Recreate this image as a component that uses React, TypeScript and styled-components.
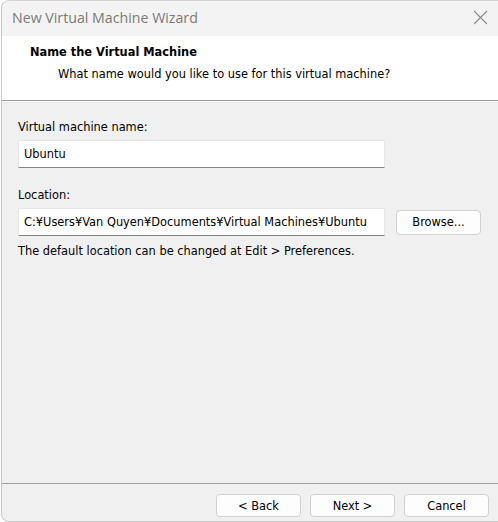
import React from "react";
import styled, { createGlobalStyle } from "styled-components";

const Global = createGlobalStyle`
  html, body { margin: 0; padding: 0; background: #ffffff; }
  body { width: 498px; height: 522px; overflow: hidden; }
  #root { width: 498px; height: 522px; }
`;

const Window = styled.div`
  box-sizing: border-box;
  width: 497px;
  height: 522px;
  margin-left: 1px;
  border-left: 1px solid #c8c8c8;
  border-top: 1px solid #d4d4d4;
  border-bottom: 1px solid #c8c8c8;
  border-radius: 8px 0 0 8px;
  overflow: hidden;
  display: flex;
  flex-direction: column;
  background: #f0f0f0;
  font-family: "DejaVu Sans", Tahoma, sans-serif;
  font-size: 11.4px;
  color: #000;
`;

const TitleBar = styled.div`
  height: 35px;
  flex: none;
  background: #f3f3f3;
  display: flex;
  align-items: center;
  justify-content: space-between;
  padding: 0 10px 0 10px;
`;

const Title = styled.span`
  font-family: "Open Sans", "Noto Sans", sans-serif;
  font-size: 14.2px;
  color: #7a7a7a;
  margin-top: -2px;
`;

const CloseIcon = styled.svg`
  width: 15px;
  height: 15px;
  margin-top: -2px;
`;

const Header = styled.div`
  flex: none;
  height: 65px;
  background: #ffffff;
  border-bottom: 1px solid #a0a0a0;
  box-sizing: border-box;
  padding: 9px 0 0 28px;
  display: flex;
  flex-direction: column;
  gap: 8px;
`;

const HeaderTitle = styled.div`
  font-weight: bold;
`;

const HeaderSub = styled.div`
  padding-left: 28px;
`;

const Body = styled.div`
  flex: 1;
  border-top: 1px solid #ffffff;
  padding: 18px 16px 0 16px;
  display: flex;
  flex-direction: column;
`;

const Label = styled.div<{ $top?: number }>`
  margin-top: ${(p) => p.$top ?? 0}px;
  margin-bottom: 6px;
`;

const Row = styled.div`
  display: flex;
  align-items: center;
  gap: 11px;
`;

const Field = styled.div`
  box-sizing: border-box;
  width: 367px;
  height: 28px;
  background: #ffffff;
  border: 1px solid #e6e6e6;
  border-bottom: 1px solid #858585;
  padding: 0 5px;
  display: flex;
  align-items: center;
  white-space: nowrap;
  overflow: hidden;
`;

const Button = styled.div<{ $h?: number }>`
  box-sizing: border-box;
  width: 85px;
  height: ${(p) => p.$h ?? 23}px;
  border: 1px solid #d0d0d0;
  border-radius: 4px;
  background: #fdfdfd;
  display: flex;
  align-items: center;
  justify-content: center;
`;

const Note = styled.div`
  margin-top: 8px;
`;

const Footer = styled.div`
  flex: none;
  height: 38px;
  border-top: 1px solid #a0a0a0;
  box-sizing: border-box;
  display: flex;
  justify-content: flex-end;
  align-items: flex-start;
  gap: 9px;
  padding: 10px 9px 0 0;
`;

export default function App() {
  return (
    <>
      <Global />
      <Window>
        <TitleBar>
          <Title>New Virtual Machine Wizard</Title>
          <CloseIcon viewBox="0 0 15 15">
            <path d="M1 1 L14 14 M14 1 L1 14" stroke="#8a8a8a" strokeWidth="1.1" fill="none" />
          </CloseIcon>
        </TitleBar>
        <Header>
          <HeaderTitle>Name the Virtual Machine</HeaderTitle>
          <HeaderSub>What name would you like to use for this virtual machine?</HeaderSub>
        </Header>
        <Body>
          <Label>Virtual machine name:</Label>
          <Field>Ubuntu</Field>
          <Label $top={20}>Location:</Label>
          <Row>
            <Field>C:¥Users¥Van Quyen¥Documents¥Virtual Machines¥Ubuntu</Field>
            <Button $h={25}>Browse...</Button>
          </Row>
          <Note>The default location can be changed at Edit &gt; Preferences.</Note>
        </Body>
        <Footer>
          <Button>&lt; Back</Button>
          <Button>Next &gt;</Button>
          <Button>Cancel</Button>
        </Footer>
      </Window>
    </>
  );
}
